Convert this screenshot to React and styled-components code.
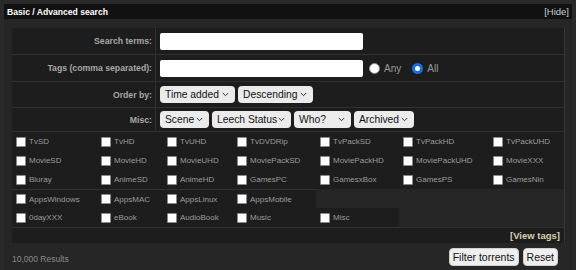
import React from "react";
import styled, { createGlobalStyle } from "styled-components";

const GlobalStyle = createGlobalStyle`
  html, body {
    margin: 0;
    padding: 0;
    background: #2a2a2a;
    font-family: "Liberation Sans", Arial, sans-serif;
  }
`;

const Page = styled.div`
  padding: 4px 4px 0 4px;
`;

const Header = styled.div`
  display: flex;
  justify-content: space-between;
  align-items: center;
  height: 15px;
  padding: 0 3px;
  background: #111;
  color: #fff;
  font-size: 8.6px;
  font-weight: bold;
`;

const HideLink = styled.span`
  color: #c8ccd8;
  font-weight: normal;
  font-size: 9.5px;
`;

const Panel = styled.div`
  background: #262626;
  padding: 9px 7px 5px 8px;
`;

const Table = styled.div`
  background: #1d1d1d;
  border-right: 1px solid #363636;
`;

const FormRow = styled.div`
  display: grid;
  grid-template-columns: 144px 1fr;
  height: ${(p) => p.$h}px;
  border-bottom: 1px solid #303030;
`;

const Label = styled.div`
  display: flex;
  align-items: center;
  justify-content: flex-end;
  padding-right: 3px;
  border-right: 1px solid #303030;
  color: #a8a8a8;
  font-size: 8.7px;
  font-weight: bold;
  white-space: nowrap;
`;

const Value = styled.div`
  display: flex;
  align-items: center;
  gap: 3px;
  padding-left: 4px;
`;

const TextInput = styled.div`
  width: 203px;
  height: 17px;
  background: #fff;
  border-radius: 2px;
`;

const RadioGroup = styled.label`
  display: flex;
  align-items: center;
  gap: 4px;
  margin-left: ${(p) => p.$ml}px;
  color: #9a9a9a;
  font-size: 10px;
`;

const Radio = styled.span`
  box-sizing: border-box;
  width: 11px;
  height: 11px;
  border-radius: 50%;
  background: #fff;
  border: ${(p) => (p.$on ? "3px solid #1a6fe0" : "1px solid #888")};
`;

const Select = styled.div`
  box-sizing: border-box;
  display: flex;
  align-items: center;
  justify-content: space-between;
  flex-shrink: 0;
  width: ${(p) => p.$w}px;
  height: 17px;
  padding: 0 6px 0 5px;
  background: #ebebeb;
  border-radius: 4px;
  color: #111;
  font-size: 10.3px;
  white-space: nowrap;
`;

const Chevron = () => (
  <svg width="7" height="5" viewBox="0 0 7 5">
    <path d="M0.8 1 L3.5 3.7 L6.2 1" fill="none" stroke="#333" strokeWidth="1" />
  </svg>
);

const CatGrid = styled.div`
  display: grid;
  grid-template-columns: 85px 66px 70px 83px 83px 90px 1fr;
  background: #262626;
`;

const Cell = styled.label`
  display: flex;
  align-items: center;
  gap: 3px;
  height: ${(p) => (p.$sep ? 18 : 19)}px;
  padding-left: 4px;
  background: #1d1d1d;
  border-top: ${(p) => (p.$sep ? "1px solid #333" : "none")};
  color: #9c9c9c;
  font-size: 8px;
  white-space: nowrap;
`;

const Check = styled.span`
  box-sizing: border-box;
  width: 10px;
  height: 10px;
  background: #fff;
  border: 1px solid #8a8a8a;
  border-radius: 1px;
`;

const TagsRow = styled.div`
  display: flex;
  justify-content: flex-end;
  align-items: center;
  height: 15px;
  padding-right: 4px;
  background: #1d1d1d;
  border-top: 1px solid #303030;
  color: #d9d0ac;
  font-size: 9.5px;
  font-weight: bold;
`;

const Footer = styled.div`
  display: flex;
  justify-content: space-between;
  align-items: flex-start;
  padding: 5px 7px 0 0;
`;

const Results = styled.span`
  color: #8a8a8a;
  font-size: 8.5px;
  padding-top: 6px;
`;

const Buttons = styled.div`
  display: flex;
  gap: 4px;
`;

const Button = styled.button`
  height: 18px;
  padding: 0 3px;
  border: 1px solid #cfcfcf;
  border-radius: 4px;
  background: #eee;
  color: #111;
  font-family: "Liberation Sans", Arial, sans-serif;
  font-size: 10.5px;
`;

const rows = [
  ["TvSD", "TvHD", "TvUHD", "TvDVDRip", "TvPackSD", "TvPackHD", "TvPackUHD"],
  ["MovieSD", "MovieHD", "MovieUHD", "MoviePackSD", "MoviePackHD", "MoviePackUHD", "MovieXXX"],
  ["Bluray", "AnimeSD", "AnimeHD", "GamesPC", "GamesxBox", "GamesPS", "GamesNin"],
  ["AppsWindows", "AppsMAC", "AppsLinux", "AppsMobile"],
  ["0dayXXX", "eBook", "AudioBook", "Music", "Misc"],
];

export default function App() {
  return (
    <Page>
      <GlobalStyle />
      <Header>
        <span>Basic / Advanced search</span>
        <HideLink>[Hide]</HideLink>
      </Header>
      <Panel>
        <Table>
          <FormRow $h={26}>
            <Label>Search terms:</Label>
            <Value>
              <TextInput />
            </Value>
          </FormRow>
          <FormRow $h={26}>
            <Label>Tags (comma separated):</Label>
            <Value>
              <TextInput />
              <RadioGroup $ml={3}>
                <Radio />
                Any
              </RadioGroup>
              <RadioGroup $ml={8}>
                <Radio $on />
                All
              </RadioGroup>
            </Value>
          </FormRow>
          <FormRow $h={25}>
            <Label>Order by:</Label>
            <Value>
              <Select $w={75}>Time added <Chevron /></Select>
              <Select $w={75}>Descending <Chevron /></Select>
            </Value>
          </FormRow>
          <FormRow $h={23}>
            <Label>Misc:</Label>
            <Value>
              <Select $w={49}>Scene <Chevron /></Select>
              <Select $w={79}>Leech Status <Chevron /></Select>
              <Select $w={57}>Who? <Chevron /></Select>
              <Select $w={60}>Archived <Chevron /></Select>
            </Value>
          </FormRow>
          {rows.map((row, i) => (
            <CatGrid key={i}>
              {row.map((name) => (
                <Cell key={name} $sep={i === 3}>
                  <Check />
                  {name}
                </Cell>
              ))}
            </CatGrid>
          ))}
          <TagsRow>[View tags]</TagsRow>
        </Table>
        <Footer>
          <Results>10,000 Results</Results>
          <Buttons>
            <Button>Filter torrents</Button>
            <Button>Reset</Button>
          </Buttons>
        </Footer>
      </Panel>
    </Page>
  );
}
